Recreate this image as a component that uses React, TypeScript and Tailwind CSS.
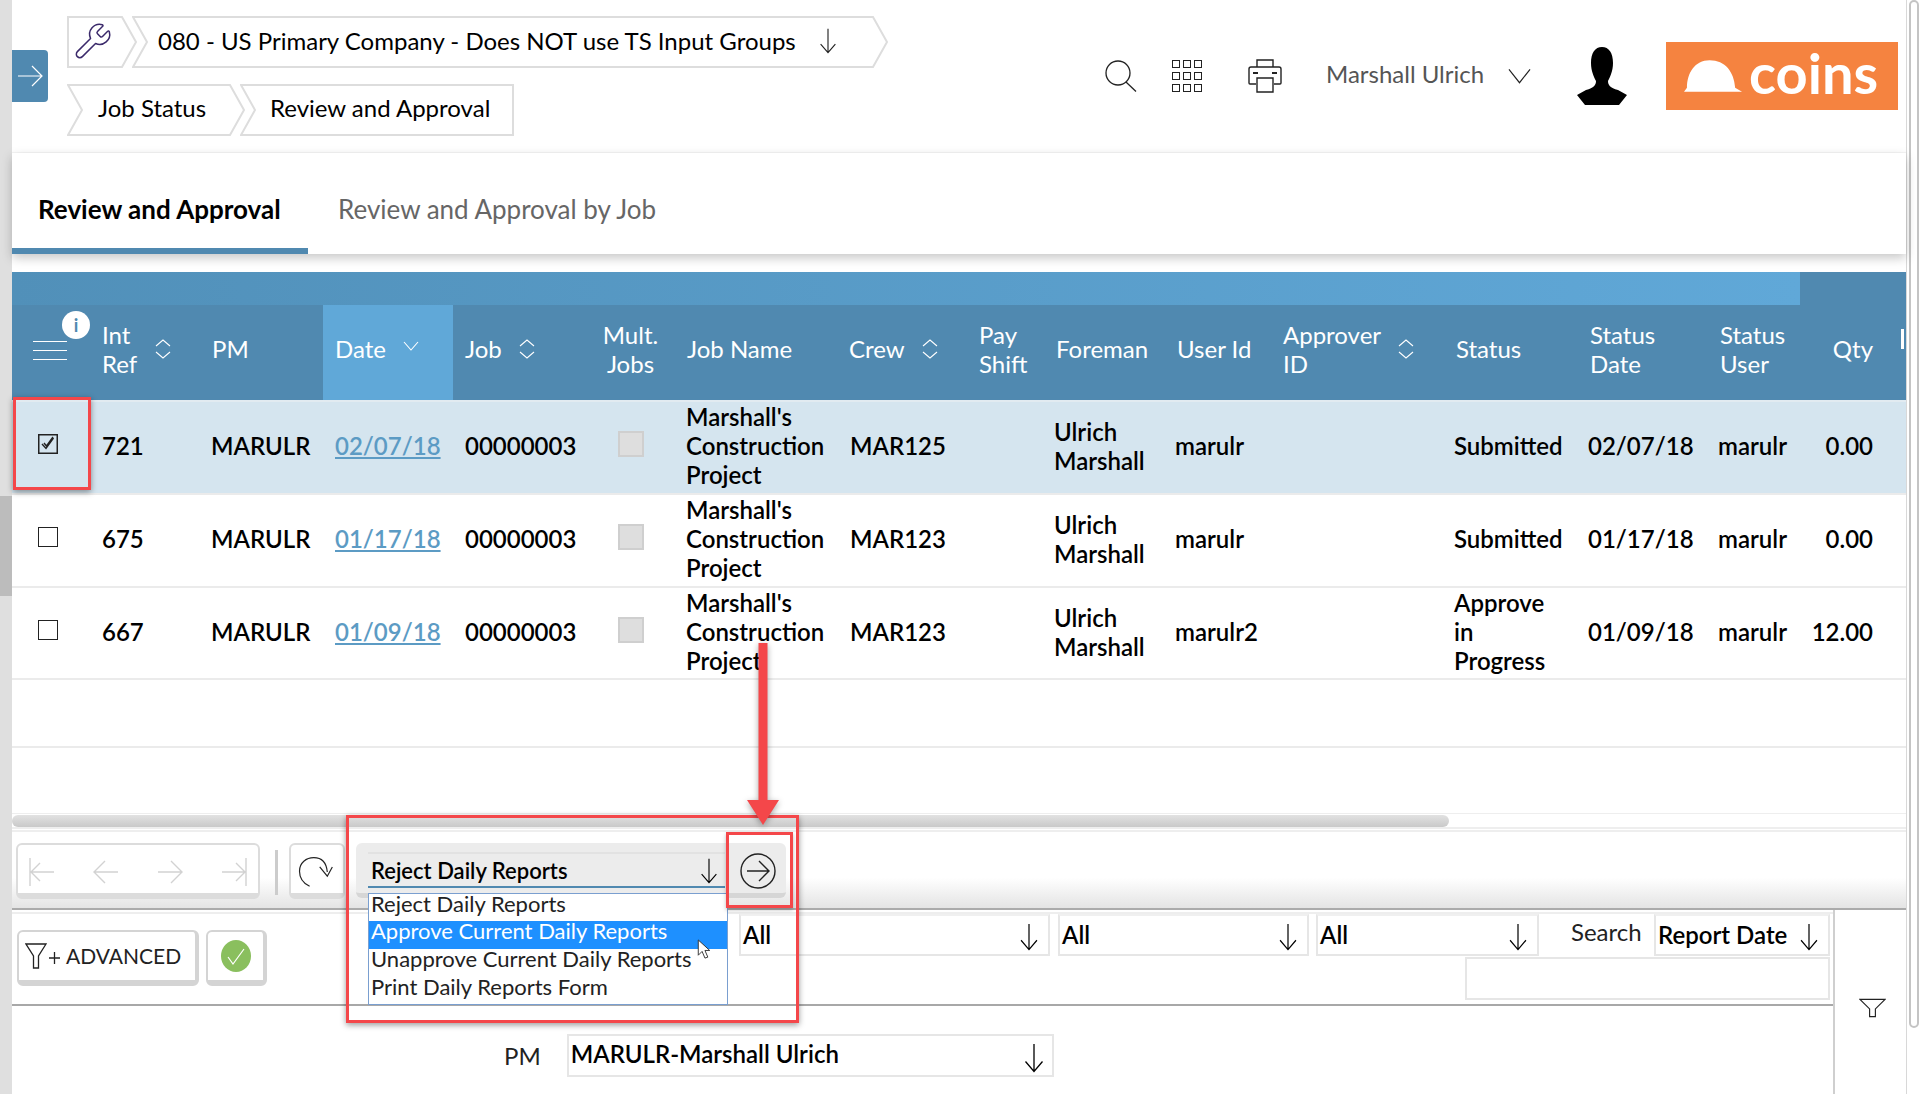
import React from 'react';
import { Wrench } from 'lucide-react';

const LATO = { fontFamily: 'Lato, "Liberation Sans", sans-serif' };

function ArrowDownThin({ className = 'w-[20px] h-[30px]' }: { className?: string }) {
  return (
    <svg viewBox="0 0 20 30" className={className} fill="none" stroke="currentColor" strokeWidth="1.3">
      <path d="M10 1V28.5M1.5 18.5L10 28.5L18.5 18.5" />
    </svg>
  );
}

function SortIcon() {
  return (
    <svg viewBox="0 0 16 20" className="w-4 h-5 shrink-0" fill="none" stroke="white" strokeWidth="1.1">
      <path d="M1 7L8 1L15 7M1 13L8 19L15 13" />
    </svg>
  );
}

function Chevron({ width, notch = true, point = true, children }: { width: number; notch?: boolean; point?: boolean; children: React.ReactNode }) {
  const w = width;
  const d = `M1 1 H${point ? w - 15 : w - 1} ${point ? `L${w - 1} 26 L${w - 15} 51` : 'V51'} H1 ${notch ? 'L15 26 Z' : 'Z'}`;
  return (
    <div className="relative h-[52px] flex items-center shrink-0" style={{ width }}>
      <svg className="absolute inset-0" width={w} height={52} fill="none" stroke="#dddddd" strokeWidth="2">
        <path d={d} />
      </svg>
      <div className="relative flex items-center w-full pb-[3px]">{children}</div>
    </div>
  );
}

type Row = { ref: string; date: string; user: string; status: string[]; crew: string; sdate: string; qty: string; height: number; checked?: boolean };

const rows: Row[] = [
  { ref: '721', date: '02/07/18', crew: 'MAR125', user: 'marulr', status: ['Submitted'], sdate: '02/07/18', qty: '0.00', height: 95, checked: true },
  { ref: '675', date: '01/17/18', crew: 'MAR123', user: 'marulr', status: ['Submitted'], sdate: '01/17/18', qty: '0.00', height: 93 },
  { ref: '667', date: '01/09/18', crew: 'MAR123', user: 'marulr2', status: ['Approve', 'in', 'Progress'], sdate: '01/09/18', qty: '12.00', height: 92 },
];

const COLS = 'grid grid-cols-[81px_108px_122px_130px_137px_87px_163px_130px_74px_121px_108px_171px_134px_130px_100px_77px_21px]';

function FilterSelect({ label, className, arrowClass = '' }: { label: string; className: string; arrowClass?: string }) {
  return (
    <div className={`h-[42px] border-2 border-[#e6e6e6] border-t-[#f0f0f0] flex items-center justify-between pl-[2px] pr-2 font-semibold text-[24px] text-black ${className}`}>
      <span>{label}</span>
      <ArrowDownThin className={`w-[22px] h-[28px] mt-1 ${arrowClass}`} />
    </div>
  );
}

function NavIcon({ d }: { d: string }) {
  return (
    <svg viewBox="0 0 30 32" className="w-[30px] h-8" fill="none" stroke="#d2d2d2" strokeWidth="1.4">
      <path d={d} />
    </svg>
  );
}

export default function App() {
  return (
    <div className="relative w-[1920px] h-[1094px] overflow-hidden bg-white flex text-black" style={LATO}>
      {/* left strip */}
      <div className="w-3 shrink-0 bg-[#dfdfdf] flex flex-col">
        <div className="h-[496px]" />
        <div className="h-[100px] bg-[#bcbcbc]" />
      </div>

      <div className="w-[1894px] shrink-0 flex flex-col">
        {/* top bar */}
        <div className="h-[153px] shrink-0 border-b border-[#f6f6f6] flex">
          <div className="w-[36px] h-[52px] mt-[50px] bg-[#5089b0] rounded-r flex items-center justify-center text-white">
            <svg viewBox="0 0 26 26" className="w-[26px] h-[26px]" fill="none" stroke="currentColor" strokeWidth="1.2">
              <path d="M1 13H25M15 3L25 13L15 23" />
            </svg>
          </div>
          <div className="ml-[19px] mt-[16px] flex flex-col gap-4 text-[24px] leading-[29px]">
            <div className="flex">
              <Chevron width={70} notch={false}>
                <Wrench className="w-[40px] h-[40px] ml-[6px] text-[#3b2a6b]" strokeWidth={0.9} />
              </Chevron>
              <div className="-ml-[5px]">
                <Chevron width={756}>
                  <span className="pl-[26px] whitespace-nowrap">080 - US Primary Company - Does NOT use TS Input Groups</span>
                  <ArrowDownThin className="w-[24px] h-[26px] ml-[20px] text-[#222]" />
                </Chevron>
              </div>
            </div>
            <div className="flex">
              <Chevron width={178}>
                <span className="pl-[31px] -mt-[2px] whitespace-nowrap">Job Status</span>
              </Chevron>
              <div className="-ml-[5px]">
                <Chevron width={274} point={false}>
                  <span className="pl-[30px] -mt-[2px] whitespace-nowrap">Review and Approval</span>
                </Chevron>
              </div>
            </div>
          </div>

          <div className="ml-auto flex items-center h-[152px] pr-2">
            <svg viewBox="0 0 32 32" className="w-8 h-8" fill="none" stroke="#222" strokeWidth="1.3">
              <circle cx="13" cy="13" r="12" />
              <path d="M21 22L31 31.5" />
            </svg>
            <div className="ml-[35px] grid grid-cols-3 gap-x-[3px] gap-y-[4px]">
              {Array.from({ length: 9 }).map((_, i) => (
                <div key={i} className="w-[8px] h-[8px] border-[1.5px] border-[#222]" />
              ))}
            </div>
            <svg viewBox="0 0 34 34" className="ml-[46px] w-[34px] h-[34px]" fill="none" stroke="#222" strokeWidth="1.4">
              <path d="M9 8V1H25V8M8 25H2C1.4 25 1 24.5 1 24V10C1 9 2 8 3 8H31C32 8 33 9 33 10V24C33 24.5 32.6 25 32 25H26" />
              <path d="M9 19H25V33H9Z" />
              <path d="M5 14H10M24 14H29" strokeWidth="2" />
            </svg>
            <span className="ml-[44px] text-[24px] text-[#555] w-[158px] whitespace-nowrap -mt-[4px]">Marshall Ulrich</span>
            <svg viewBox="0 0 24 16" className="ml-[24px] w-[23px] h-[16px]" fill="none" stroke="#222" strokeWidth="1.2">
              <path d="M1 1L12 15L23 1" />
            </svg>
            <svg viewBox="0 0 50 58" className="ml-[46px] w-[50px] h-[58px]" fill="black">
              <path d="M25 0C32 0 36 6 36 16C36 24 33 30 31 34C31 38 33 41 41 43L50 48L42 58H8L0 48L9 43C17 41 19 38 19 34C17 30 14 24 14 16C14 6 18 0 25 0Z" />
            </svg>
            <div className="ml-[39px] w-[232px] h-[68px] bg-[#f58340] flex items-center text-white">
              <svg viewBox="0 0 60 34" className="ml-[18px] w-[59px] h-[34px]" fill="white">
                <path d="M3 29C3 14 11 1 26 1C42 1 51 13 52 29L59 33H0L3 29Z" />
              </svg>
              <span className="ml-[6px] text-[56px] leading-none font-bold -translate-y-[3px]">coins</span>
            </div>
          </div>
        </div>

        {/* tabs */}
        <div className="h-[101px] shrink-0 flex items-end shadow-[0_4px_10px_rgba(0,0,0,0.22)] relative">
          <div className="w-[296px] h-[101px] border-b-[6px] border-[#5089b0] pl-[26px] pt-[40px] text-[26px] leading-[32px] font-bold text-black whitespace-nowrap">
            Review and Approval
          </div>
          <div className="h-[101px] pl-[30px] pt-[40px] text-[26px] leading-[32px] text-[#666] whitespace-nowrap">
            Review and Approval by Job
          </div>
        </div>

        <div className="h-[18px] shrink-0" />

        {/* blue bar */}
        <div className="h-[33px] shrink-0 flex bg-[#5089b0]">
          <div className="w-[1788px] bg-gradient-to-r from-[#5190b9] to-[#60a8d8]" />
        </div>

        {/* table header */}
        <div className={`${COLS} h-[95px] shrink-0 bg-[#5089b0] text-white text-[24px] leading-[29px] overflow-hidden`}>
          <div className="relative">
            <div className="absolute left-[21px] top-[36px] w-[34px] flex flex-col gap-[8px]">
              <div className="h-px w-full bg-white" />
              <div className="h-px w-full bg-white" />
              <div className="h-px w-full bg-white" />
            </div>
            <div className="absolute left-[50px] top-[6px] w-[28px] h-[28px] rounded-full bg-white text-[#5089b0] text-[18px] leading-[28px] text-center font-bold">i</div>
          </div>
          <div className="flex items-center pl-[9px] pb-[8px] gap-[18px]">
            <span>Int<br />Ref</span>
            <SortIcon />
          </div>
          <div className="flex items-center pl-[11px] pb-[8px]">PM</div>
          <div className="bg-[#60a8d8] flex items-center pl-[12px] pb-[8px] gap-[17px]">
            <span>Date</span>
            <svg viewBox="0 0 16 10" className="w-4 h-[10px] -mt-[6px]" fill="none" stroke="white" strokeWidth="1.1">
              <path d="M1 1L8 9L15 1" />
            </svg>
          </div>
          <div className="flex items-center pl-[12px] pb-[8px] gap-[17px]">
            <span>Job</span>
            <SortIcon />
          </div>
          <div className="flex items-center justify-center text-center pr-[6px] pb-[8px]">Mult.<br />Jobs</div>
          <div className="flex items-center pl-[10px] pb-[8px]">Job Name</div>
          <div className="flex items-center pl-[9px] pb-[8px] gap-[17px]">
            <span>Crew</span>
            <SortIcon />
          </div>
          <div className="flex items-center pl-[9px] pb-[8px]">Pay<br />Shift</div>
          <div className="flex items-center pl-[12px] pb-[8px]">Foreman</div>
          <div className="flex items-center pl-[12px] pb-[8px]">User Id</div>
          <div className="flex items-center pl-[10px] pb-[8px] gap-[17px]">
            <span>Approver<br />ID</span>
            <SortIcon />
          </div>
          <div className="flex items-center pl-[12px] pb-[8px]">Status</div>
          <div className="flex items-center pl-[12px] pb-[8px]">Status<br />Date</div>
          <div className="flex items-center pl-[12px] pb-[8px]">Status<br />User</div>
          <div className="flex items-center justify-end pr-[12px] pb-[8px]">Qty</div>
          <div className="pl-[16px] pt-[24px]">
            <div className="w-[3px] h-[20px] bg-white" />
          </div>
        </div>

        {/* table rows */}
        {rows.map((r) => (
          <div
            key={r.ref}
            className={`${COLS} shrink-0 border-b-2 border-[#ebebeb] text-[24px] leading-[29px] font-semibold items-center pb-[6px] ${r.checked ? 'bg-[#d5e5ef] border-t-2 border-t-[#e2ebf1]' : 'bg-white'}`}
            style={{ height: r.height }}
          >
            <div className="pl-[26px] flex">
              {r.checked ? (
                <svg viewBox="0 0 20 20" className="w-5 h-5 -mt-[4px]" fill="none">
                  <rect x="0.75" y="0.75" width="18.5" height="18.5" stroke="#222" strokeWidth="1.5" />
                  <path d="M4 10L8 14.5L15.5 4M6 9L8.5 12L15 3" stroke="#222" strokeWidth="1.4" />
                </svg>
              ) : (
                <div className="w-5 h-5 -mt-[4px] border-[1.5px] border-[#222] bg-white" />
              )}
            </div>
            <div className="pl-[9px]">{r.ref}</div>
            <div className="pl-[10px]">MARULR</div>
            <div className="pl-[12px] text-[#5c9bc4] underline underline-offset-2">{r.date}</div>
            <div className="pl-[12px]">00000003</div>
            <div className="flex justify-center pr-[6px]">
              <div className="w-[26px] h-[26px] -mt-[4px] bg-[#dedede] border-2 border-[#cfcfcf]" />
            </div>
            <div className="pl-[9px]">Marshall's<br />Construction<br />Project</div>
            <div className="pl-[10px]">{r.crew}</div>
            <div />
            <div className="pl-[10px]">Ulrich<br />Marshall</div>
            <div className="pl-[10px]">{r.user}</div>
            <div />
            <div className="pl-[10px]">
              {r.status.map((s) => (
                <div key={s}>{s}</div>
              ))}
            </div>
            <div className="pl-[10px]">{r.sdate}</div>
            <div className="pl-[10px]">marulr</div>
            <div className="text-right pr-[12px]">{r.qty}</div>
            <div />
          </div>
        ))}

        <div className="h-[68px] shrink-0 border-b-2 border-[#ebebeb]" />
        <div className="h-[66px] shrink-0 border-b border-[#eeeeee]" />

        {/* horizontal scrollbar */}
        <div className="h-[15px] shrink-0 border-b-2 border-[#eeeeee] pt-px">
          <div className="w-[1437px] h-[12px] rounded-full bg-gradient-to-b from-[#e2e2e2] to-[#c9c9c9]" />
        </div>

        {/* toolbar */}
        <div className="h-[80px] shrink-0 border-t-2 mt-[1px] border-[#eeeeee] border-b-2 border-b-[#ababab] bg-gradient-to-b from-white from-60% to-[#e4e4e4] flex items-start pt-[11px]">
          <div className="ml-[4px] w-[244px] h-[56px] border-2 border-b-[6px] border-[#dcdcdc] rounded-md bg-white flex items-center justify-between px-[10px] pt-[6px]">
            <NavIcon d="M2 2V30M26 16H3M12 7L3 16L12 25" />
            <NavIcon d="M27 16H3M14 5L3 16L14 27" />
            <NavIcon d="M3 16H27M16 5L27 16L16 27" />
            <NavIcon d="M28 2V30M4 16H27M18 7L27 16L18 25" />
          </div>
          <div className="ml-[15px] mt-[7px] w-[3px] h-[45px] bg-[#cccccc]" />
          <div className="ml-[11px] w-[56px] h-[56px] border-2 border-b-[6px] border-[#dcdcdc] rounded-md bg-white flex items-center justify-start pl-[4px] pt-[6px]">
            <svg viewBox="0 0 42 38" className="w-[41px] h-[32px]" fill="none" stroke="#222" strokeWidth="1.4">
              <path d="M14 36C6 32 2 26 2 18C2 8 10 2 19 2C28 2 34 8 35 19" />
              <path d="M26 13L35 24L41 13" />
            </svg>
          </div>
          <div className="ml-[11px] w-[430px] h-[55px] bg-[#ececec] border-b-[5px] border-[#d6d6d6] rounded-md flex pl-[12px] pt-[9px]">
            <div className="w-[357px] h-[36px] bg-[#ececec] border-t-2 border-[#e2e2e2] border-b-2 border-b-[#5089b0] flex items-center justify-between pl-[3px] pr-[5px] text-[22px] font-semibold">
              <span>Reject Daily Reports</span>
              <ArrowDownThin className="w-[22px] h-[26px] mt-[2px]" />
            </div>
            <div className="ml-[15px] pt-[1px]">
              <svg viewBox="0 0 36 36" className="w-[36px] h-[36px]" fill="none" stroke="#222" strokeWidth="1.4">
                <circle cx="18" cy="18" r="17" />
                <path d="M7 18H29M19 8L29 18L19 28" />
              </svg>
            </div>
          </div>
        </div>

        {/* filter area + form */}
        <div className="flex-1 flex min-h-0">
          <div className="w-[1821px] shrink-0 flex flex-col">
            <div className="h-[94px] shrink-0 border-b-2 border-[#a8a8a8] border-t-2 border-t-[#eeeeee] mt-[2px] flex">
              <div className="w-[727px] shrink-0 flex items-start pt-[16px] pl-[5px] gap-[7px]">
                <div className="w-[182px] h-[56px] border-2 border-b-[6px] border-r-[4px] border-[#d4d4d4] rounded-md flex items-center pl-[6px] text-[21px] text-[#222]">
                  <svg viewBox="0 0 36 28" className="w-[36px] h-[28px] shrink-0" fill="none" stroke="#222" strokeWidth="1.3">
                    <path d="M1 2H21L13.5 14V26H8.5V14L1 2ZM24 16H35M29.5 10V22" />
                  </svg>
                  <span className="ml-[5px]">ADVANCED</span>
                </div>
                <div className="w-[61px] h-[56px] border-2 border-b-[6px] border-r-[4px] border-[#d4d4d4] rounded-md flex items-center justify-center">
                  <svg viewBox="0 0 30 32" className="w-[30px] h-[32px]">
                    <ellipse cx="15" cy="16" rx="15" ry="16" fill="#8abf5e" />
                    <path d="M7 17L12 24L23 9" fill="none" stroke="white" strokeWidth="1.2" />
                  </svg>
                </div>
              </div>
              <div className="flex-1 flex flex-col">
                <div className="flex items-start">
                  <FilterSelect label="All" className="w-[311px]" />
                  <FilterSelect label="All" className="ml-[8px] w-[251px]" />
                  <FilterSelect label="All" className="ml-[7px] w-[223px]" />
                  <div className="w-[115px] h-[42px] text-[24px] text-[#222] pl-[32px] leading-[36px] whitespace-nowrap">Search</div>
                  <FilterSelect label="Report Date" className="w-[176px] pr-1 whitespace-nowrap" />
                </div>
                <div className="flex justify-end mt-[1px] pr-[3px]">
                  <div className="w-[365px] h-[43px] border-2 border-[#e6e6e6] bg-white" />
                </div>
              </div>
            </div>
            <div className="flex items-start pt-[28px] pl-[492px]">
              <span className="text-[24px] text-[#222] mt-[4px]">PM</span>
              <div className="ml-[26px] w-[487px] h-[43px] border-2 border-[#e6e6e6] flex items-center justify-between pl-[2px] pr-[7px] text-[24px] font-semibold">
                <span className="-mt-[3px]">MARULR-Marshall Ulrich</span>
                <ArrowDownThin className="w-[22px] h-[30px] mt-1" />
              </div>
            </div>
          </div>
          <div className="flex-1 border-l-2 border-[#cfcfcf] pl-[24px] pt-[88px]">
            <svg viewBox="0 0 28 20" className="w-[27px] h-[20px]" fill="none" stroke="#222" strokeWidth="1.2">
              <path d="M1 1H27L17 11V19H11V11L1 1Z" />
            </svg>
          </div>
        </div>
      </div>

      {/* right scrollbar */}
      <div className="flex-1 bg-white flex justify-center border-l border-[#d8d8d8]">
        <div className="w-[10px] h-[1028px] border-2 border-[#c4c4c4] rounded-full" />
      </div>

      {/* open dropdown */}
      <div className="absolute left-[368px] top-[893px] w-[360px] h-[112px] border border-[#7a9fd0] bg-white text-[22px] leading-[20px] text-[#222]">
        <div className="pl-[2px] h-[27px]">Reject Daily Reports</div>
        <div className="pl-[2px] h-[28px] bg-[#1e90ff] text-white">Approve Current Daily Reports</div>
        <div className="pl-[2px] h-[28px]">Unapprove Current Daily Reports</div>
        <div className="pl-[2px] h-[28px]">Print Daily Reports Form</div>
      </div>
      <svg viewBox="0 0 14 22" className="absolute left-[697px] top-[939px] w-[14px] h-[21px]" fill="white" stroke="#333" strokeWidth="1">
        <path d="M1 1V17L5 13L8 20L11 19L8 12H13L1 1Z" />
      </svg>

      {/* annotations */}
      <div className="absolute left-[13px] top-[397px] w-[78px] h-[93px] border-[3px] border-[#f4474a] shadow-[0_2px_6px_rgba(0,0,0,0.4)]" />
      <div className="absolute left-[346px] top-[815px] w-[453px] h-[208px] border-[3px] border-[#f4474a] shadow-[0_2px_6px_rgba(0,0,0,0.4)]" />
      <div className="absolute left-[726px] top-[832px] w-[67px] h-[76px] border-[3px] border-[#f4474a] shadow-[0_2px_4px_rgba(0,0,0,0.25)]" />
      <svg viewBox="0 0 34 186" className="absolute left-[746px] top-[640px] w-[34px] h-[186px] drop-shadow-[0_2px_3px_rgba(0,0,0,0.35)]">
        <path d="M12.5 3H21.5V160H33L17 185L1 160H12.5Z" fill="#f4474a" />
      </svg>
    </div>
  );
}
